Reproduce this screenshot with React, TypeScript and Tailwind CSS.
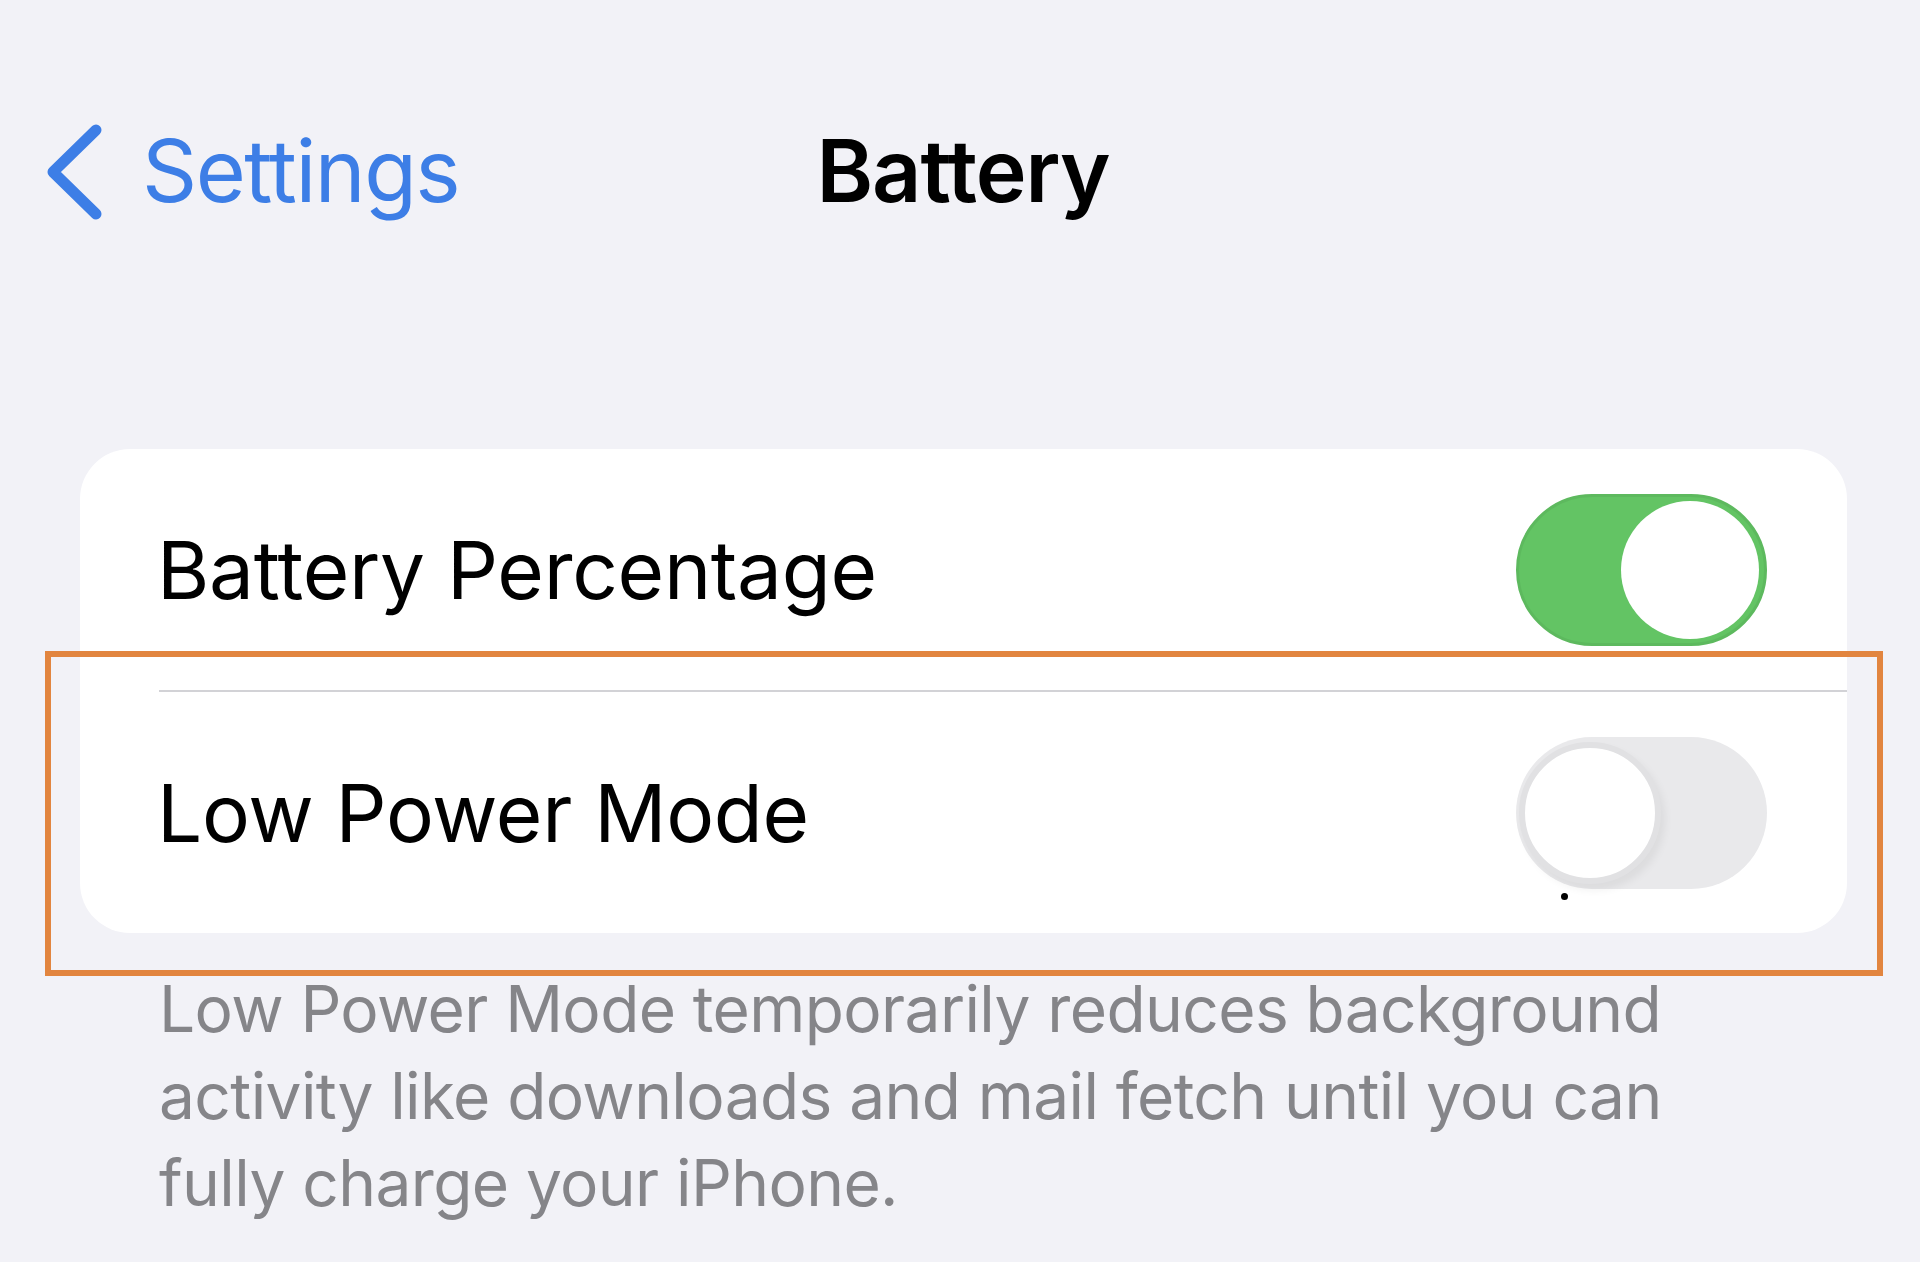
import React from 'react';

const FONT = { fontFamily: 'Inter, "Noto Sans", "Liberation Sans", sans-serif' };

/** iOS-style switch */
function Switch({ on }: { on: boolean }) {
  if (on) {
    return (
      <div className="relative w-[251px] h-[152px] rounded-full bg-[#63c464] border-[3px] border-[#5db95e] shrink-0">
        <div className="absolute right-[5px] top-[4px] w-[138px] h-[138px] rounded-full bg-white" />
      </div>
    );
  }
  return (
    <div className="relative w-[251px] h-[152px] rounded-full bg-[#e9e9eb] shrink-0">
      <div className="absolute left-[3px] top-[5px] w-[142px] h-[142px] rounded-full bg-white border-[6px] border-[#e1e1e3] shadow-[4px_6px_8px_rgba(0,0,0,0.06)]" />
      {/* stray dot under the knob */}
      <div className="absolute left-[45px] top-[156px] w-[7px] h-[7px] rounded-full bg-black" />
    </div>
  );
}

function SettingRow({ label, on }: { label: string; on: boolean }) {
  return (
    <div className="flex items-center justify-between h-[241px] pl-[77px] pr-[80px]">
      <span className="text-[80px] text-black tracking-[-0.3px]">{label}</span>
      <Switch on={on} />
    </div>
  );
}

export default function App() {
  return (
    <div className="relative w-full h-[1262px] bg-[#f2f2f7] overflow-hidden" style={FONT}>
      {/* navigation bar */}
      <div className="pt-[107px] h-[227px]">
        <div className="grid grid-cols-[1fr_auto_1fr] items-center h-[120px]">
          <div className="flex items-center pl-[42px] gap-[38px] text-[#3d7ee6]">
            <svg width="62" height="96" viewBox="0 0 62 96" fill="none">
              <path d="M54 6 L11 48 L54 90" stroke="#3d7ee6" strokeWidth="11" strokeLinecap="round" strokeLinejoin="round" />
            </svg>
            <span className="text-[86px] tracking-[-1.5px]">Settings</span>
          </div>
          <span className="text-[86px] font-semibold text-black tracking-[-1px] pl-[6px]">Battery</span>
          <div />
        </div>
      </div>

      {/* settings group */}
      <div className="ml-[80px] mr-[73px] mt-[222px] bg-white rounded-[50px]">
        <SettingRow label="Battery Percentage" on />
        <div className="ml-[79px] h-[2px] bg-[#d2d2d6]" />
        <SettingRow label="Low Power Mode" on={false} />
      </div>

      {/* footer note */}
      <p className="pl-[159px] pr-[200px] pt-[32px] text-[64px] leading-[87px] text-[#858589] tracking-[-0.6px]">
        Low Power Mode temporarily reduces background
        <br />
        activity like downloads and mail fetch until you can
        <br />
        fully charge your iPhone.
      </p>

      {/* highlight frame */}
      <div className="absolute left-[45px] top-[651px] w-[1838px] h-[325px] border-[6px] border-[#e2853f]" />
    </div>
  );
}
